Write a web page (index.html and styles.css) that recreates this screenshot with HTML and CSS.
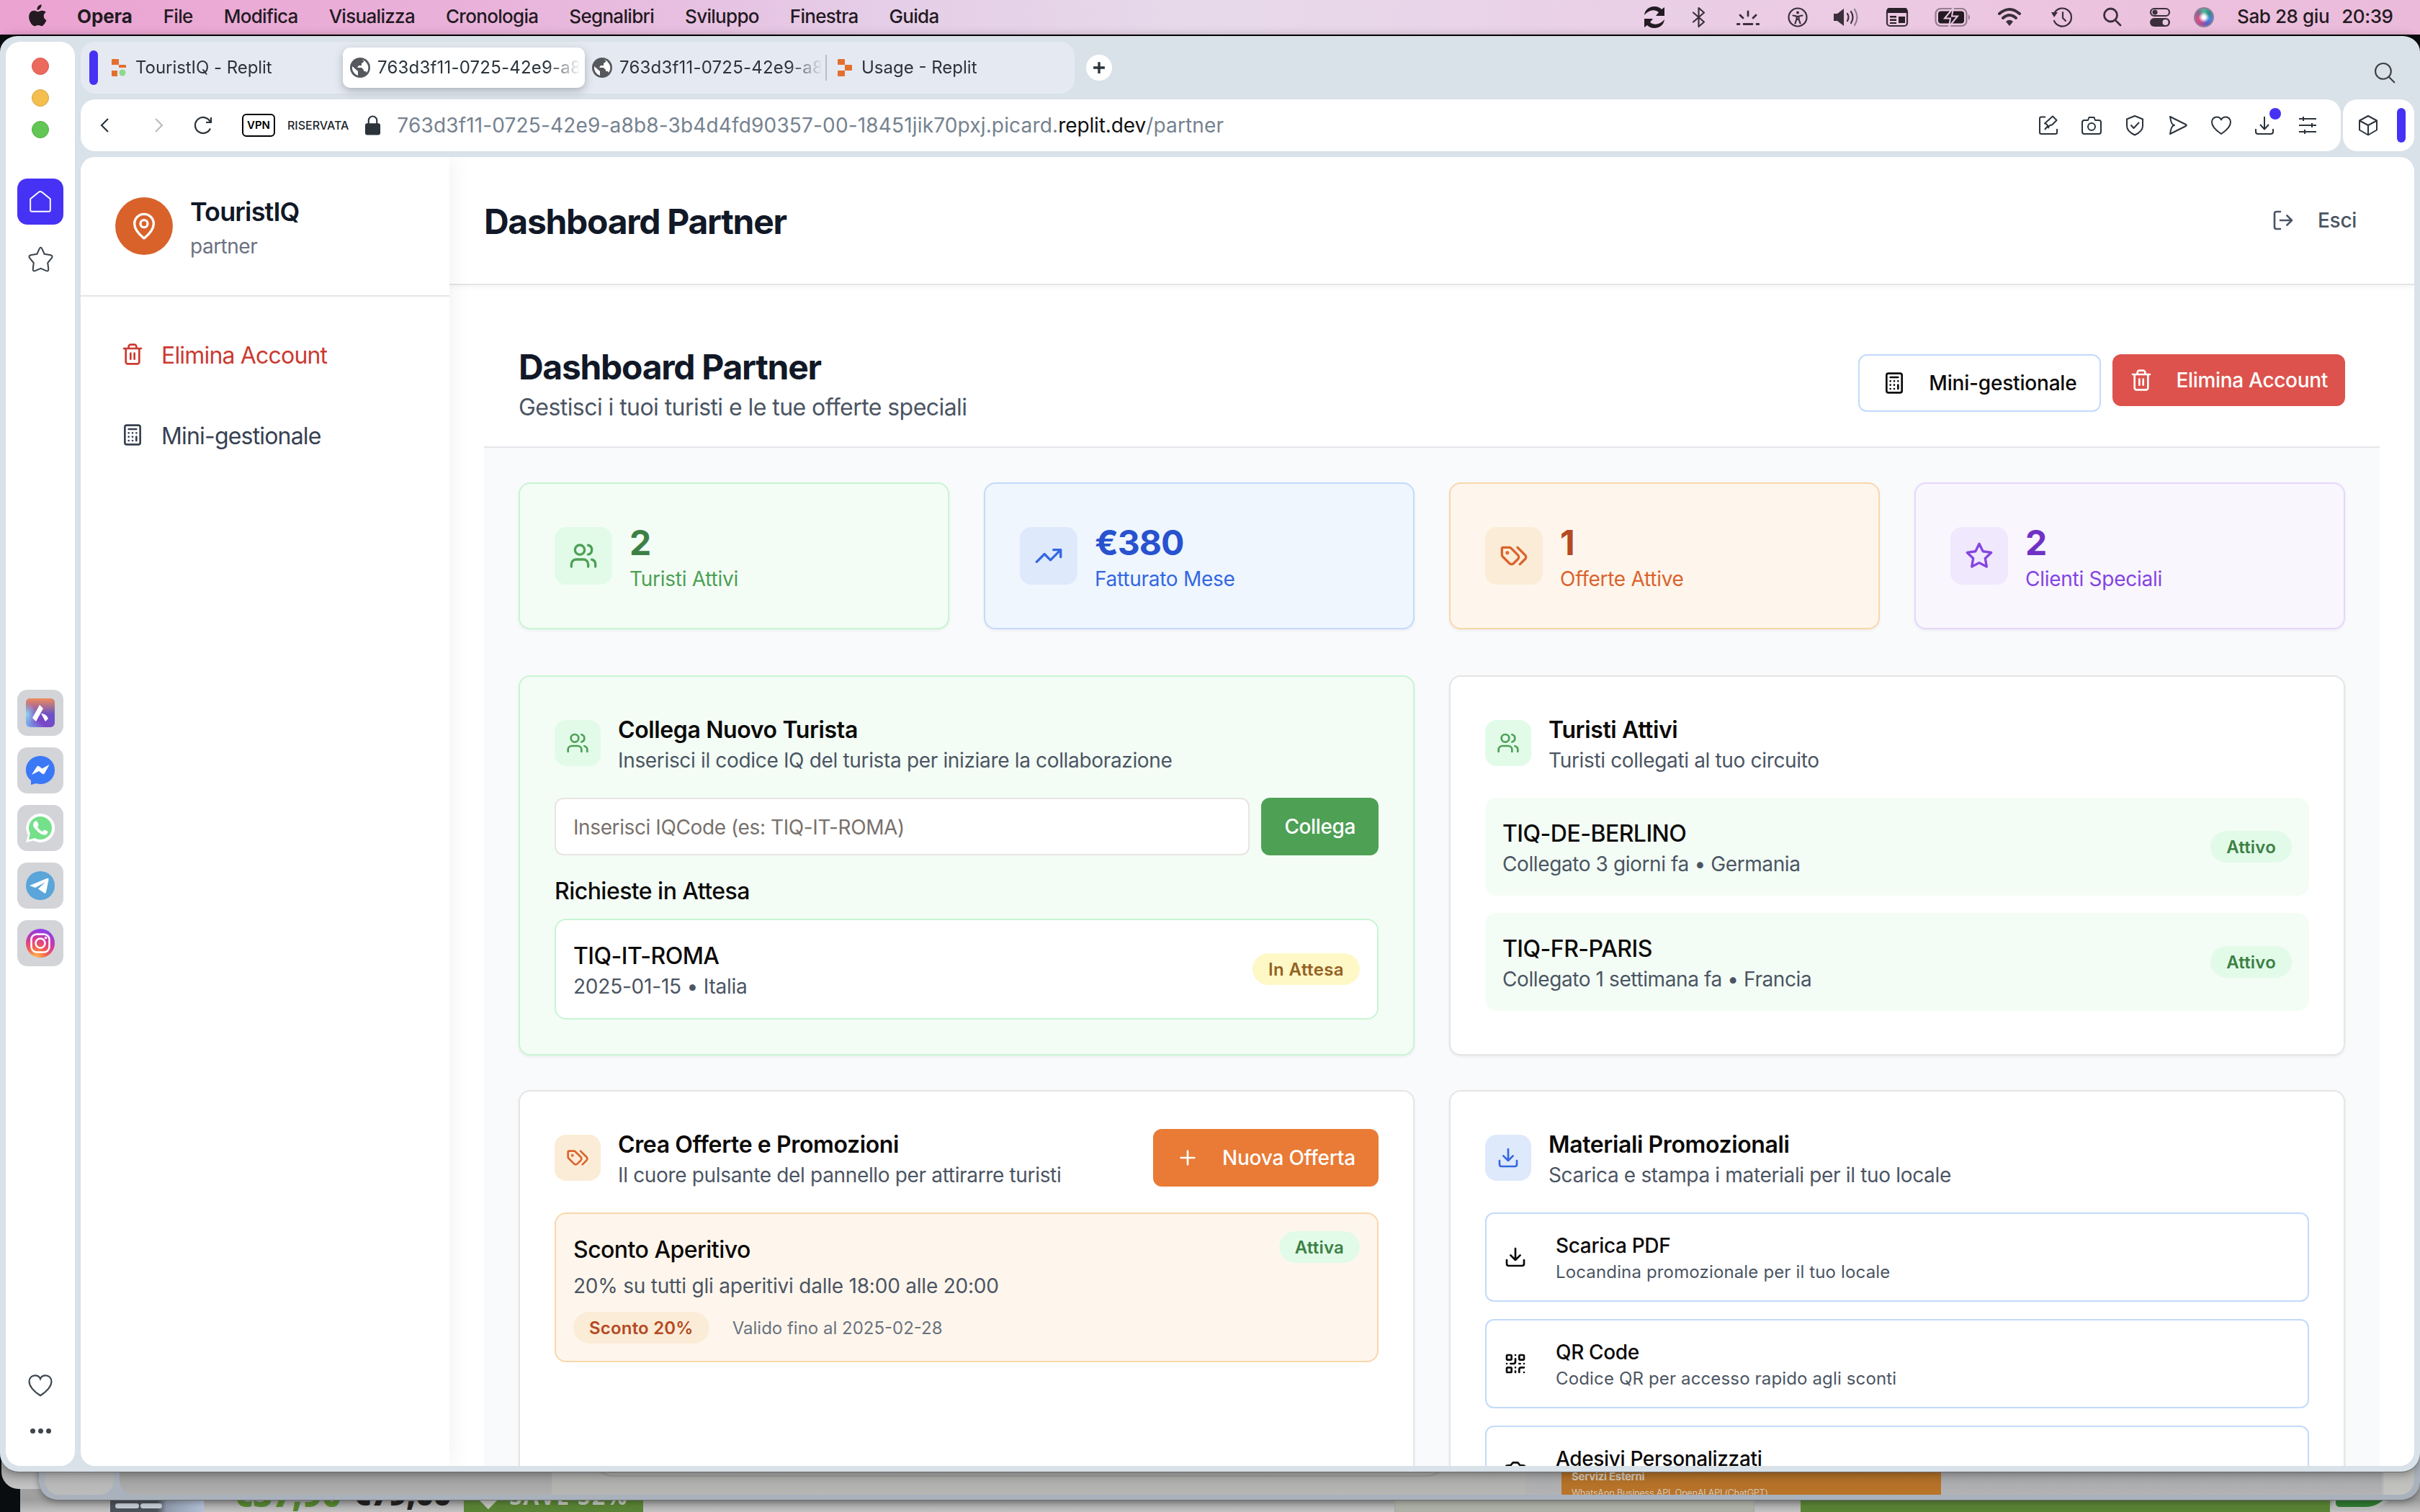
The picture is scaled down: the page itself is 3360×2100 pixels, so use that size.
FILE: index.html
```html
<!DOCTYPE html>
<html lang="it">
<head>
<meta charset="utf-8">
<title>TouristIQ - Dashboard Partner</title>
<link rel="stylesheet" href="styles.css">
</head>
<body>
<svg class="sprite" aria-hidden="true">
  <symbol id="i-users" viewBox="0 0 24 24"><path d="M16 21v-2a4 4 0 0 0-4-4H6a4 4 0 0 0-4 4v2"/><circle cx="9" cy="7" r="4"/><path d="M22 21v-2a4 4 0 0 0-3-3.87M16 3.13a4 4 0 0 1 0 7.75"/></symbol>
  <symbol id="i-trend" viewBox="0 0 24 24"><path d="M22 7l-8.5 8.5-5-5L2 17M16 7h6v6"/></symbol>
  <symbol id="i-tags" viewBox="0 0 24 24"><path d="m15 5 6.3 6.3a2.4 2.4 0 0 1 0 3.4L17 19"/><path d="M9.586 5.586A2 2 0 0 0 8.172 5H3a1 1 0 0 0-1 1v5.172a2 2 0 0 0 .586 1.414L8.29 18.29a2.426 2.426 0 0 0 3.42 0l3.58-3.58a2.426 2.426 0 0 0 0-3.42z"/><circle cx="6.5" cy="9.5" r=".5" fill="currentColor"/></symbol>
  <symbol id="i-star" viewBox="0 0 24 24"><path d="M12 2l3.09 6.26L22 9.27l-5 4.87 1.18 6.88L12 17.77l-6.18 3.25L7 14.14 2 9.27l6.91-1.01z"/></symbol>
  <symbol id="i-download" viewBox="0 0 24 24"><path d="M21 15v4a2 2 0 0 1-2 2H5a2 2 0 0 1-2-2v-4M7 10l5 5 5-5M12 15V3"/></symbol>
  <symbol id="i-qr" viewBox="0 0 24 24"><rect width="5" height="5" x="3" y="3" rx="1"/><rect width="5" height="5" x="16" y="3" rx="1"/><rect width="5" height="5" x="3" y="16" rx="1"/><path d="M21 16h-3a2 2 0 0 0-2 2v3M21 21v.01M12 7v3a2 2 0 0 1-2 2H7M3 12h.01M12 3h.01M12 16v.01M16 12h1M21 12v.01M12 21v-1"/></symbol>
  <symbol id="i-camera" viewBox="0 0 24 24"><path d="M14.5 4h-5L7 7H4a2 2 0 0 0-2 2v9a2 2 0 0 0 2 2h16a2 2 0 0 0 2-2V9a2 2 0 0 0-2-2h-3z"/><circle cx="12" cy="13" r="3"/></symbol>
  <symbol id="i-pin" viewBox="0 0 24 24"><path d="M20 10c0 4.993-5.539 10.193-7.399 11.799a1 1 0 0 1-1.202 0C9.539 20.193 4 14.993 4 10a8 8 0 0 1 16 0"/><circle cx="12" cy="10" r="3"/></symbol>
  <symbol id="i-logout" viewBox="0 0 24 24"><path d="M9 21H5a2 2 0 0 1-2-2V5a2 2 0 0 1 2-2h4M16 17l5-5-5-5M21 12H9"/></symbol>
  <symbol id="i-trash" viewBox="0 0 24 24"><path d="M3 6h18M19 6v14c0 1-1 2-2 2H7c-1 0-2-1-2-2V6M8 6V4c0-1 1-2 2-2h4c1 0 2 1 2 2v2M10 11v6M14 11v6"/></symbol>
  <symbol id="i-calc" viewBox="0 0 24 24"><rect width="16" height="20" x="4" y="2" rx="2"/><path d="M8 6h8M16 14v4M16 10h.01M12 10h.01M8 10h.01M12 14h.01M8 14h.01M12 18h.01M8 18h.01"/></symbol>
  <symbol id="i-plus" viewBox="0 0 24 24"><path d="M5 12h14M12 5v14"/></symbol>
  <symbol id="i-heart" viewBox="0 0 32 32"><path d="M16 28C7 22 3 17 3 11.500A6.800 6.800 0 0 1 9.800 4.500C12.500 4.500 15 6 16 8.500C17 6 19.500 4.500 22.200 4.500A6.800 6.800 0 0 1 29 11.500C29 17 25 22 16 28z"/></symbol>
  <symbol id="i-globe" viewBox="0 0 28 28"><circle cx="14" cy="14" r="14" fill="#55585c"/><path d="M3 12l8 7v6A12 12 0 0 1 3 12zM12 3h7v3l-3 2v3h-4l-2 3h6l3 3v2h3l1 2A11.500 11.500 0 0 0 24 9l-3-4-4-2z" fill="#fff"/></symbol>
</svg>

<header class="menubar">
  <svg class="apple" viewBox="0 0 24 30"><path d="M16.500 1c.2 2-0.600 3.600-1.600 4.800-1 1.200-2.400 2-3.900 1.900-.2-1.900.6-3.600 1.600-4.700C13.600 1.800 15.200 1.100 16.500 1zM22 10.600c-1.800 1.200-2.700 2.700-2.700 4.700 0 2.300 1.300 4.200 3.300 5-.9 2.500-3.300 7.200-5.900 7.300-1.600 0-2.200-1-4.200-1s-2.700 1-4.200 1C4.800 27.500 1 21.600 1 16.300 1 11.500 4 8.600 7.500 8.600c1.800 0 3.400 1.200 4.700 1.200 1.100 0 3-1.300 5.200-1.200 1.800.1 3.500.7 4.600 2z" fill="#231a22"/></svg>
  <nav class="menus"><b>Opera</b><span>File</span><span>Modifica</span><span>Visualizza</span><span>Cronologia</span><span>Segnalibri</span><span>Sviluppo</span><span>Finestra</span><span>Guida</span></nav>
  <div class="status">
    <svg viewBox="0 0 32 32"><path d="M2 13C3 5 9 1 16 1c5 0 8 2 10 4l4-3v12H18l4-5c-6-5-14-3-20 4zM30 19c-1 8-7 12-14 12-5 0-8-2-10-4l-4 3V18h12l-4 5c6 5 14 3 20-4z" fill="#231a22"/></svg>
    <svg viewBox="0 0 32 32"><path d="M8 9.500l15 13-7.500 6.500V3L23 9.500l-15 13" class="s2"/></svg>
    <svg viewBox="0 0 32 32"><path d="M1 25.500h3M10 25.500h12M28 25.500h3M16 8v6M5 13l4 4M27 13l-4 4" class="s3"/></svg>
    <svg viewBox="0 0 32 32"><circle cx="16" cy="16" r="12.500" class="s2"/><circle cx="16" cy="9.500" r="2" fill="#3a2f3a"/><path d="M9.500 13.500l5 1v4l-2 6M22.500 13.500l-5 1v4l2 6M14.500 15h3v4h-3z" class="s2"/></svg>
    <svg class="vol" viewBox="0 0 36 32"><path d="M1 11h5l9-7v24l-9-7H1z" fill="#3a2f3a"/><path d="M20 11q3 5 0 10M25 8q5 8 0 16" class="s2"/><path d="M30 5q7 11 0 22" class="s2 faint"/></svg>
    <svg viewBox="0 0 32 32"><rect x="2" y="4" width="28" height="24" rx="4" class="s2"/><path d="M2 6a3 3 0 0 1 3-3h22a3 3 0 0 1 3 3v4H2zM6 14h9v2.500H6zM6 18.500h9V21H6zM6 23h9v2H6zM18 15h9v9h-9z" fill="#2a2029"/></svg>
    <svg class="batt" viewBox="0 0 50 32"><rect x="1.500" y="4" width="43" height="24" rx="7" class="s2 faint"/><rect x="5" y="7.500" width="36" height="17" rx="4" fill="#231a22"/><path d="M26 3L14 17.500h8L20 29l12-14.500h-8z" fill="#231a22" stroke="#ecc9e3" stroke-width="2"/><path d="M47 12q4 4 0 8z" fill="#87758a"/></svg>
    <svg viewBox="0 0 32 32"><path d="M2 11q14-12 28 0M7 17q9-8 18 0" class="s4"/><path d="M11 22q5-4.500 10 0l-5 6z" fill="#3a2f3a"/></svg>
    <svg viewBox="0 0 32 32"><path d="M5.500 10A12.500 12.500 0 1 1 5 21M17 9v8l4 4" class="s2"/><path d="M1 9h9l-5 7z" fill="#3a2f3a"/></svg>
    <svg viewBox="0 0 32 32"><circle cx="13.500" cy="13" r="9" class="s3"/><path d="M20 20l7 7" class="s3"/></svg>
    <svg viewBox="0 0 32 32"><rect x="3" y="4" width="26" height="10" rx="5" class="s2"/><circle cx="9" cy="9" r="3.500" fill="#3a2f3a"/><rect x="2" y="17" width="28" height="12" rx="6" fill="#3a2f3a"/><circle cx="23.500" cy="23" r="4" fill="#ecc9e3"/></svg>
    <i class="siri"></i>
  </div>
  <div class="clock"><span>Sab 28 giu</span><span>20:39</span></div>
</header>

<div class="back back-a"></div>
<div class="back back-shop">
  <i class="thumb"></i><b class="price">€37,90</b><b class="price old">€79,00</b><span class="save"><i></i>SAVE 52%</span><i class="field"></i><i class="cta"></i><i class="wa"></i>
</div>
<div class="back back-b">
  <i class="bp bp1"></i>
  <div class="bp bp2"><i class="outline"></i><div class="ext"><b>Servizi Esterni</b><span>WhatsApp Business API, OpenAI API (ChatGPT)</span></div></div>
</div>

<main class="window">
  <aside class="dock">
    <div class="lights"><i></i><i></i><i></i></div>
    <div class="home"><svg viewBox="0 0 32 32"><path d="M3 12.500L14 3.500q2-1.500 4 0l11 9V27q0 2-2 2H5q-2 0-2-2z"/></svg></div>
    <svg class="fav" viewBox="0 0 36 36"><path d="M16.200 3.500Q18 0 19.800 3.500L23 10.500 31.500 12Q35 13 32.800 16L27.500 22.500 28.500 31Q28.500 34.500 25.500 33.200L18 30 10.500 33.200Q7.500 34.500 7.500 31L8.500 22.500 3.200 16Q1 13 4.500 12L13 10.500z"/></svg>
    <div class="apps">
      <div><svg viewBox="0 0 40 40"><defs><linearGradient id="ga" x1="0" y1="1" x2="1" y2="0"><stop offset="0" stop-color="#7ab8f0"/><stop offset=".35" stop-color="#7a45c8"/><stop offset="1" stop-color="#5a62c4"/></linearGradient><linearGradient id="gb" x2="0" y2="1"><stop offset="0" stop-color="#f08a5a"/><stop offset=".55" stop-color="#f08a5a" stop-opacity="0"/></linearGradient><radialGradient id="gc" cx="0" cy=".55" r=".4"><stop offset="0" stop-color="#8fdcf0"/><stop offset="1" stop-color="#8fdcf0" stop-opacity="0"/></radialGradient></defs><rect width="40" height="40" rx="6" fill="url(#ga)"/><rect width="40" height="40" rx="6" fill="url(#gb)"/><rect width="40" height="40" rx="6" fill="url(#gc)"/><path d="M19 9l5 5-10 18-5-5zM21 21q7 0 10 7l-4 4z" fill="#fff"/></svg></div>
      <div><svg viewBox="0 0 40 40"><path d="M20 0c11.500 0 20 8.500 20 19.500S31.500 39 20 39c-2 0-4-.3-6-1l-7 2v-6C2.500 30.500 0 25.500 0 19.500 0 8.500 8.500 0 20 0z" fill="#3b78f6"/><path d="M8 26l7-11q1.500-2 3.500-.5l4 3 10-5.500L26 24q-1.500 2-3.500.5L18 21z" fill="#fff"/></svg></div>
      <div><svg viewBox="0 0 40 40"><path d="M20 0a20 20 0 1 1-9.500 37.500L0 40l3-10A20 20 0 0 1 20 0z" fill="#fff"/><circle cx="20" cy="20" r="16" fill="#74e08a"/><path d="M6 27l-2 9 9-2z" fill="#74e08a"/><path d="M12 11q3-2 4 1l1.500 3q0 2-1.500 3 2 5 7 7 2-3 4-2l3 1.500q1 3-2 4.500-5 2-11.500-4T10 16q0-3 2-5z" fill="#fff"/></svg></div>
      <div><svg viewBox="0 0 40 40"><circle cx="20" cy="20" r="20" fill="#5aa5da"/><path d="M5 20L29 10q3-1 2.500 2L28 29q-.6 2.500-3 1l-8-5.500L27 15 13 23z" fill="#fff"/></svg></div>
      <div><svg viewBox="0 0 40 40"><defs><radialGradient id="ig" cx=".35" cy="1" r="1"><stop offset="0" stop-color="#fdc04e"/><stop offset=".35" stop-color="#f5614c"/><stop offset=".65" stop-color="#d93b92"/><stop offset="1" stop-color="#8a3cf0"/></radialGradient></defs><circle cx="20" cy="20" r="20" fill="url(#ig)"/><g fill="none" stroke="#fff" stroke-width="2.500"><rect x="7.500" y="7.500" width="25" height="25" rx="7.500"/><circle cx="20" cy="20" r="6.500"/></g><circle cx="27.500" cy="12.500" r="1.800" fill="#fff"/></svg></div>
    </div>
    <svg class="love"><use href="#i-heart"/></svg>
    <div class="dots"><i></i><i></i><i></i></div>
  </aside>

  <div class="main">
    <div class="tabrow">
      <div class="tabs">
        <i class="pill"></i>
        <div class="tab"><svg class="rp" viewBox="0 0 20 24"><path d="M0 1q0-1 1-1h8q1 0 1 1v7H0zM10 8h9q1 0 1 1v3h-10zM0 16h8v8H1q-1 0-1-1z" fill="#e36f2f"/><circle cx="15" cy="19" r="4.500" fill="#8fd88f"/></svg><span>TouristIQ - Replit</span></div>
        <div class="tab active"><svg><use href="#i-globe"/></svg><span>763d3f11-0725-42e9-a8b8</span></div>
        <div class="tab"><svg><use href="#i-globe"/></svg><span>763d3f11-0725-42e9-a8b8</span></div>
        <div class="tab sep"><svg class="rp" viewBox="0 0 20 24"><path d="M0 1q0-1 1-1h8q1 0 1 1v7h9q1 0 1 1v6q0 1-1 1h-9v7q0 1-1 1H1q-1 0-1-1v-6q0-1 1-1h9V8H1q-1 0-1-1z" fill="#e36f2f"/></svg><span>Usage - Replit</span></div>
      </div>
      <div class="newtab"><svg viewBox="0 0 16 16"><path d="M8 1v14M1 8h14"/></svg></div>
      <svg class="find" viewBox="0 0 28 28"><circle cx="11.500" cy="11.500" r="10.500"/><path d="M19 19l8 8"/></svg>
    </div>
    <div class="bars">
      <div class="address">
        <svg class="nav" viewBox="0 0 32 32"><path d="M20 7l-9 9 9 9"/></svg>
        <svg class="nav off" viewBox="0 0 32 32"><path d="M12 7l9 9-9 9"/></svg>
        <svg class="nav" viewBox="0 0 32 32"><path d="M26 20.500A11 11 0 1 1 26 11.500M27 5v7h-7"/></svg>
        <span class="vpn">VPN</span><span class="priv">RISERVATA</span>
        <svg class="lock" viewBox="0 0 24 28"><rect x="1" y="11" width="22" height="17" rx="3" fill="#2b333b"/><path d="M6 12V7a6 6 0 0 1 12 0v5" fill="none" stroke="#2b333b" stroke-width="2.200"/></svg>
        <span class="url">763d3f11-0725-42e9-a8b8-3b4d4fd90357-00-18451jik70pxj.picard.<b>replit.dev</b>/partner</span>
        <div class="tools">
          <svg viewBox="0 0 32 32"><path d="M12 4.500H6q-2 0-2 2V26q0 2 2 2h20q2 0 2-2v-5M27.500 9L22 3.500 11 13.500q4 .5 5 6 1-4 5-4zM16 16l-5 6"/></svg>
          <svg viewBox="0 0 32 32"><path d="M11 9l1.500-4h7L21 9h5q3 0 3 3v13q0 3-3 3H6q-3 0-3-3V12q0-3 3-3z"/><circle cx="16" cy="18" r="5"/></svg>
          <svg viewBox="0 0 32 32"><path d="M16 3l11 4.500V17q0 7.500-11 12.500Q5 24.500 5 17V7.500z"/><path d="M10.500 15.500l4 4.500 7.500-8"/></svg>
          <svg viewBox="0 0 32 32"><path d="M5 4l22 11q1.500 1 0 2L5 28q1.500-12 6-12Q6.500 16 5 4z"/></svg>
          <svg><use href="#i-heart"/></svg>
          <svg viewBox="0 0 32 32"><path d="M4 21v4q0 3 3 3h18q3 0 3-3v-4M16 4v17M10 15l6 6.500 6-6.500"/></svg>
          <svg viewBox="0 0 32 32"><path d="M4 7h24M4 16h24M4 25h24M10 4v6M22 13v6M12 22v6"/></svg>
          <i class="badge"></i>
        </div>
      </div>
      <div class="extra"><svg viewBox="0 0 32 32"><path d="M16 3l12 6.500v13L16 29.500 4 22.500v-13zM4 9.500L16 16l12-6.500M16 16v13.500"/></svg><i class="pill"></i></div>
    </div>

    <div class="page">
      <aside class="side">
        <div class="brand"><div class="logo"><svg class="ic"><use href="#i-pin"/></svg></div><div><h2>TouristIQ</h2><p>partner</p></div></div>
        <nav><a class="danger"><svg class="ic"><use href="#i-trash"/></svg><span>Elimina Account</span></a><a><svg class="ic"><use href="#i-calc"/></svg><span>Mini-gestionale</span></a></nav>
      </aside>
      <div class="content">
        <header class="top"><h1>Dashboard Partner</h1><a class="exit"><svg class="ic"><use href="#i-logout"/></svg>Esci</a></header>
        <div class="board">
          <div class="intro">
            <div><h1>Dashboard Partner</h1><p>Gestisci i tuoi turisti e le tue offerte speciali</p></div>
            <div class="actions"><a class="btn line"><svg class="ic"><use href="#i-calc"/></svg>Mini-gestionale</a><a class="btn red"><svg class="ic"><use href="#i-trash"/></svg>Elimina Account</a></div>
          </div>
          <div class="body">
            <section class="stats">
              <div class="stat green"><div class="box"><svg class="ic"><use href="#i-users"/></svg></div><div><b>2</b><span>Turisti Attivi</span></div></div>
              <div class="stat blue"><div class="box"><svg class="ic"><use href="#i-trend"/></svg></div><div><b>€380</b><span>Fatturato Mese</span></div></div>
              <div class="stat orange"><div class="box"><svg class="ic"><use href="#i-tags"/></svg></div><div><b>1</b><span>Offerte Attive</span></div></div>
              <div class="stat purple"><div class="box"><svg class="ic"><use href="#i-star"/></svg></div><div><b>2</b><span>Clienti Speciali</span></div></div>
            </section>
            <section class="cards">
              <article class="card tint">
                <div class="head green"><div class="box"><svg class="ic"><use href="#i-users"/></svg></div><div class="ttl"><h3>Collega Nuovo Turista</h3><p>Inserisci il codice IQ del turista per iniziare la collaborazione</p></div></div>
                <div class="form"><input placeholder="Inserisci IQCode (es: TIQ-IT-ROMA)"><a class="btn ok">Collega</a></div>
                <h4>Richieste in Attesa</h4>
                <div class="row outlined"><div><h5>TIQ-IT-ROMA</h5><p>2025-01-15 • Italia</p></div><span class="tag yellow">In Attesa</span></div>
              </article>
              <article class="card">
                <div class="head green"><div class="box"><svg class="ic"><use href="#i-users"/></svg></div><div class="ttl"><h3>Turisti Attivi</h3><p>Turisti collegati al tuo circuito</p></div></div>
                <div class="list">
                  <div class="row"><div><h5>TIQ-DE-BERLINO</h5><p>Collegato 3 giorni fa • Germania</p></div><span class="tag">Attivo</span></div>
                  <div class="row"><div><h5>TIQ-FR-PARIS</h5><p>Collegato 1 settimana fa • Francia</p></div><span class="tag">Attivo</span></div>
                </div>
              </article>
              <article class="card">
                <div class="head orange"><div class="box"><svg class="ic"><use href="#i-tags"/></svg></div><div class="ttl"><h3>Crea Offerte e Promozioni</h3><p>Il cuore pulsante del pannello per attirarre turisti</p></div><a class="btn new"><svg class="ic"><use href="#i-plus"/></svg>Nuova Offerta</a></div>
                <div class="offer">
                  <div class="offer-top"><h5>Sconto Aperitivo</h5><span class="tag">Attiva</span></div>
                  <p>20% su tutti gli aperitivi dalle 18:00 alle 20:00</p>
                  <div class="offer-foot"><span class="tag amber">Sconto 20%</span><small>Valido fino al 2025-02-28</small></div>
                </div>
              </article>
              <article class="card">
                <div class="head blue"><div class="box"><svg class="ic"><use href="#i-download"/></svg></div><div class="ttl"><h3>Materiali Promozionali</h3><p>Scarica e stampa i materiali per il tuo locale</p></div></div>
                <div class="list">
                  <a class="mat"><svg class="ic"><use href="#i-download"/></svg><div><b>Scarica PDF</b><small>Locandina promozionale per il tuo locale</small></div></a>
                  <a class="mat"><svg class="ic"><use href="#i-qr"/></svg><div><b>QR Code</b><small>Codice QR per accesso rapido agli sconti</small></div></a>
                  <a class="mat"><svg class="ic"><use href="#i-camera"/></svg><div><b>Adesivi Personalizzati</b></div></a>
                </div>
              </article>
            </section>
          </div>
        </div>
      </div>
    </div>
  </div>
</main>
</body>
</html>
```
FILE: styles.css
```css
* { box-sizing: border-box; margin: 0; padding: 0; }
body { width: 3360px; height: 2100px; overflow: hidden; position: relative; background: #0a0d10; color: #0c0a09; font: 400 28px/40px Inter, "Liberation Sans", sans-serif; letter-spacing: -.35px; }
i { font-style: normal; display: block; }
svg { display: block; flex: none; }
.sprite { position: absolute; width: 0; height: 0; }
.ic { width: 32px; height: 32px; fill: none; stroke: currentColor; stroke-width: 2; stroke-linecap: round; stroke-linejoin: round; }
h1 { font-size: 48px; line-height: 61px; padding-top: 3px; font-weight: 700; letter-spacing: -1.3px; color: #111827; }

/* macOS menu bar */
.menubar { height: 48px; display: flex; align-items: center; background: linear-gradient(90deg, #eba3d1 0%, #e9b2da 20%, #e5cde7 36%, #e7d9ea 50%, #e9d3e8 62%, #ecc8e2 80%, #ebbada 100%); font-size: 26px; font-weight: 500; letter-spacing: -.7px; color: #231a22; padding-left: 39px; }
.apple { width: 27px; height: 34px; margin-top: -4px; }
.menus { display: flex; gap: 43px; margin-left: 41px; flex: 1; margin-top: -2px; }
.menus b { letter-spacing: -.1px; }
.status { display: grid; grid-template-columns: 62px 62px 74px 64px 70px 72px 82px 76px 70px 70px 62px 60px; justify-items: center; align-items: center; }
.status svg { width: 32px; height: 32px; }
.status svg.vol { width: 38px; }
.status svg.batt { width: 50px; }
.s2, .s3, .s4 { fill: none; stroke: #3a2f3a; stroke-width: 2.2; stroke-linecap: round; stroke-linejoin: round; }
.s3 { stroke-width: 2.8; }
.s4 { stroke-width: 4; }
.faint { opacity: .5; }
.siri { width: 28px; height: 28px; border-radius: 50%; background: radial-gradient(circle, #fff 0 12%, transparent 45%), conic-gradient(#4cb897, #2a8a8a, #4b86d8, #5560c8, #c04a8a, #d8508a, #8a6090, #4cb897); border: 2px solid #8f7f98; }
.clock { display: flex; gap: 17px; width: 270px; padding-left: 16px; margin-top: -2px; white-space: nowrap; letter-spacing: -.4px; }

/* Windows behind the browser */
.back { position: absolute; }
.back-a { left: 2px; top: 1900px; width: 200px; height: 168px; border-radius: 0 0 0 24px; background: linear-gradient(#a8a8a8 85%, #c6c6c6); z-index: 2; }
.back-shop { left: 28px; top: 2044px; right: 0; height: 56px; background: linear-gradient(#a8a8a8, #9d9d9d 70%, #c2c2c2); z-index: 1; overflow: hidden; }
.back-shop > * { position: absolute; white-space: nowrap; }
.thumb { left: 125px; top: 30px; width: 130px; height: 26px; background: linear-gradient(90deg, #4a5158 0 50%, #8e99ab 60%, #b2c0d6); }
.thumb::before, .thumb::after { content: ""; position: absolute; left: 7px; top: 14px; width: 33px; height: 7px; background: #c3ccd4; border-radius: 4px; }
.thumb::after { left: 42px; width: 30px; }
.price { left: 296px; top: 4px; font: 800 46px/54px "Open Sans", sans-serif; letter-spacing: .2px; color: #55852f; }
.price.old { left: 462px; font-size: 43px; color: #222; letter-spacing: -.5px; }
.save { left: 616px; top: 0; width: 249px; height: 56px; background: #598334; color: #c0c3bb; font: 700 32px/36px "Open Sans", sans-serif; padding: 16px 0 0 63px; letter-spacing: 1.6px; }
.save i { position: absolute; left: 24px; top: 28px; width: 20px; height: 20px; background: #c0c3bb; transform: rotate(45deg); }
.field { left: 1908px; top: 0; width: 500px; height: 80px; border: 2px solid #a5aaa0; border-radius: 0 0 20px 20px; background: #adb0a6; }
.cta { left: 2472px; top: 0; width: 735px; height: 56px; background: #598334; }
.wa { left: 3210px; top: 0; width: 90px; height: 54px; background: #2f7a30; border: 5px solid #b5b9b5; border-radius: 0 0 45px 10px; }
.back-b { left: 54px; top: 1900px; right: 0; height: 184px; border-radius: 0 0 26px 26px; background: #a9b1bc; border-bottom: 1px solid #6d7075; padding: 0 8px 7px; display: flex; gap: 8px; z-index: 3; box-shadow: 0 2px 10px rgba(0,0,0,.35); }
.bp { border-radius: 0 0 20px 20px; overflow: hidden; }
.bp1 { width: 96px; background: linear-gradient(#b0b0b0 80%, #bcbcbc); }
.bp2 { flex: 1; position: relative; background: linear-gradient(90deg, #0000 600px, #c4c4bd55 600px 1950px, #b8bac055 1955px 3140px, #d5d5d088 3145px), linear-gradient(#9b9b9b 82%, #b0b0b0); }
.outline { position: absolute; left: 660px; top: 0; width: 1180px; height: 151px; border: 2px solid #9b9b9b; border-radius: 0 0 24px 24px; }
.ext { position: absolute; left: 2002px; top: 130px; width: 527px; height: 46px; background: linear-gradient(#a86c26, #ba7429); color: #d2c8ba; padding: 11px 14px 0; letter-spacing: -.2px; white-space: nowrap; overflow: hidden; }
.ext b { display: block; font-size: 15px; line-height: 20px; letter-spacing: -.3px; margin-bottom: 5px; }
.ext span { display: block; font-size: 12.5px; line-height: 16px; }

/* Browser window */
.window { position: absolute; left: 0; top: 48px; width: 3360px; height: 1996px; border-top: 2px solid #000; border-radius: 24px 24px 26px 26px; background: #d9e1e9; padding: 8px 8px 8px; display: flex; gap: 8px; z-index: 4; box-shadow: 0 1px 0 #6a6d72, 0 3px 14px rgba(0,0,0,.35); }
.dock { width: 96px; background: #fff; border-radius: 20px; display: flex; flex-direction: column; align-items: center; }
.lights { display: grid; gap: 20px; padding-top: 22px; }
.lights i { width: 24px; height: 24px; border-radius: 50%; background: #ec695e; border: 1px solid #d6584e; }
.lights i:nth-child(2) { background: #f4bf4f; border-color: #d9a33e; }
.lights i:nth-child(3) { background: #61c654; border-color: #52ad44; }
.home { width: 64px; height: 64px; border-radius: 14px; background: #4632f4; margin-top: 56px; display: grid; place-items: center; }
.home svg { width: 34px; height: 36px; fill: none; stroke: #fff; stroke-width: 1.8; }
.fav { width: 37px; height: 37px; margin-top: 30px; fill: none; stroke: #3d454d; stroke-width: 2; }
.apps { display: grid; gap: 16px; margin-top: 579px; }
.apps div { width: 64px; height: 64px; border-radius: 14px; background: #d3d4d8; display: grid; place-items: center; }
.apps svg { width: 40px; height: 40px; }
.love { width: 38px; height: 38px; margin-top: auto; fill: none; stroke: #3d454d; stroke-width: 1.8; }
.dots { display: flex; gap: 4px; margin: 41px 0 45px; }
.dots i { width: 7px; height: 7px; border-radius: 50%; background: #3d454d; }
.main { flex: 1; min-width: 0; display: flex; flex-direction: column; gap: 8px; }
.pill { width: 12px; height: 48px; border-radius: 6px; background: #4632f4; }

.tabrow { height: 72px; display: flex; align-items: center; }
.tabs { width: 1380px; height: 72px; border-radius: 20px; background: #e5eaf2; display: flex; align-items: center; padding-left: 12px; }
.tab { width: 336px; height: 56px; border-radius: 10px; display: flex; align-items: center; padding: 0 8px 0 10px; gap: 10px; font-size: 24px; letter-spacing: .2px; color: #2b333b; position: relative; }
.tab:nth-child(2) { margin-left: 4px; letter-spacing: -.05px; }
.tab.sep { letter-spacing: 0; }
.tab span { flex: 1; overflow: hidden; white-space: nowrap; -webkit-mask-image: linear-gradient(90deg, #000 235px, transparent 282px); mask-image: linear-gradient(90deg, #000 235px, transparent 282px); }
.tab svg { width: 28px; height: 28px; }
.tab svg.rp { width: 20px; height: 24px; margin-left: 5px; margin-right: 3px; }
.tab.active { background: #fff; box-shadow: 0 4px 12px rgba(60,70,80,.35); }
.tab.sep::before { content: ""; position: absolute; left: -2px; top: 10px; width: 2px; height: 36px; background: #b9c0c6; }
.newtab { width: 36px; height: 36px; border-radius: 50%; background: #fff; margin-left: 16px; display: grid; place-items: center; }
.newtab svg { width: 18px; height: 18px; stroke: #2b333b; stroke-width: 3; }
.find { width: 29px; height: 29px; margin: 14px 26px 0 auto; fill: none; stroke: #3d3f42; stroke-width: 2; }

.bars { height: 72px; display: flex; gap: 3px; }
.address { flex: 1; background: #fff; border-radius: 20px; display: flex; align-items: center; position: relative; padding-left: 18px; }
.nav { width: 32px; height: 32px; margin-right: 42px; fill: none; stroke: #2b333b; stroke-width: 2.2; }
.nav.off { stroke: #b9bdc1; margin-right: 30px; }
.nav:nth-of-type(3) { margin-right: 38px; }
.vpn { width: 46px; height: 32px; border: 2px solid #000; border-radius: 6px; font: 600 15px/28px Inter, sans-serif; letter-spacing: 0; text-align: center; color: #000; }
.priv { font-size: 16px; font-weight: 500; letter-spacing: 0; margin: 0 22px 0 17px; color: #20262c; }
.lock { width: 23px; height: 28px; }
.url { margin-left: 22px; letter-spacing: .16px; color: #75828f; white-space: nowrap; }
.url b { font-weight: 400; color: #111; letter-spacing: -.1px; }
.tools { margin-left: auto; margin-right: 30px; display: flex; gap: 28px; position: relative; }
.tools svg, .extra svg { width: 32px; height: 32px; fill: none; stroke: #2b333b; stroke-width: 2; stroke-linejoin: round; }
.badge { position: absolute; right: 53px; top: -8px; width: 16px; height: 16px; border-radius: 50%; background: #4632f4; }
.extra { width: 99px; background: #fff; border-radius: 20px; display: flex; align-items: center; justify-content: space-between; padding: 0 12px 0 19px; }

/* Page */
.page { flex: 1; min-height: 0; background: #fff; border-radius: 20px; overflow: hidden; display: flex; }
.side { width: 512px; box-shadow: 0 0 32px rgba(0,0,0,.07); position: relative; background: #fff; z-index: 1; }
.brand { height: 194px; border-bottom: 2px solid #e4e5e6; display: flex; align-items: center; gap: 24px; padding-left: 48px; }
.logo { width: 80px; height: 80px; border-radius: 50%; background: #d9622b; color: #fff; display: grid; place-items: center; }
.logo .ic { width: 40px; height: 40px; }
.brand h2 { font-size: 36px; line-height: 56px; font-weight: 600; letter-spacing: -.87px; color: #111827; }
.brand p { color: #6b7280; letter-spacing: -.5px; }
.side nav { padding: 32px; display: grid; gap: 16px; }
.side nav a { padding: 24px; display: flex; align-items: center; gap: 24px; font-size: 32px; line-height: 48px; letter-spacing: -.82px; color: #374151; }
.side nav a span { padding-top: 3px; line-height: 45px; }
.side nav a.danger { color: #cb3a31; }
.content { flex: 1; min-width: 0; }
.top { height: 178px; border-bottom: 2px solid #e4e5e6; box-shadow: 0 2px 8px rgba(0,0,0,.05); display: flex; justify-content: space-between; padding: 56px 80px 0 48px; }
.exit { display: flex; gap: 32px; align-items: center; height: 64px; font-weight: 500; color: #4b5563; letter-spacing: -.3px; }
.board { padding: 48px 48px 0; }
.intro { height: 178px; padding: 32px 48px; border-bottom: 2px solid #e4e6ea; display: flex; justify-content: space-between; align-items: center; }
.intro p { font-size: 32px; line-height: 45px; padding-top: 3px; letter-spacing: -.56px; color: #4b5563; }
.actions { display: flex; gap: 16px; align-items: flex-start; }
.btn { display: flex; align-items: center; gap: 32px; height: 80px; padding: 0 32px; border-radius: 12px; font-weight: 500; letter-spacing: -.2px; white-space: nowrap; color: #fff; }
.btn.line { border: 2px solid #c3dafb; color: #0c0a09; }
.btn.red { background: #dd524c; height: 72px; padding: 0 24px; letter-spacing: -.31px; }
.btn.ok { background: #4ea055; letter-spacing: -.38px; }
.btn.new { background: #e97b36; margin-left: auto; letter-spacing: -.22px; }
.body { background: #f9fafc; padding: 48px 48px 200px; }
.stats { display: grid; grid-template-columns: repeat(4, 1fr); gap: 48px; margin-bottom: 64px; }
.stat { height: 204px; border: 2px solid var(--line); background: var(--bg); border-radius: 16px; box-shadow: 0 2px 4px rgba(0,0,0,.06); display: flex; align-items: center; gap: 24px; padding: 0 48px; }
.stat b { display: block; font-size: 48px; line-height: 61px; padding-top: 3px; letter-spacing: -1px; color: var(--strong); }
.stat span { display: block; color: var(--fg); letter-spacing: -.26px; }
.box { width: 64px; height: 64px; border-radius: 16px; background: var(--box); color: var(--fg); display: grid; place-items: center; flex: none; }
.stat .box { width: 80px; height: 80px; }
.stat .ic { width: 40px; height: 40px; }
.green { --bg: #f3fdf5; --line: #c8f5d3; --box: #e2fbe9; --fg: #4ea055; --strong: #3d8045; }
.blue { --bg: #eff6fe; --line: #c3dafb; --box: #dee9fb; --fg: #3467e2; --strong: #2852ce; }
.orange { --bg: #fef6ec; --line: #f9d7ab; --box: #fbecd7; --fg: #da632d; --strong: #b54a24; }
.purple { --bg: #f9f6fe; --line: #e6d7fc; --box: #f0e8fd; --fg: #8444e2; --strong: #7032c6; }
.cards { display: grid; grid-template-columns: 1fr 1fr; gap: 48px; }
.card { background: #fff; border: 2px solid #e5e5e4; border-radius: 16px; padding: 48px; box-shadow: 0 2px 4px rgba(0,0,0,.06); }
.card.tint { background: #f3fdf5; border-color: #c8f5d3; }
.card p { color: #4b5563; letter-spacing: -.22px; }
.head { height: 88px; display: flex; align-items: center; gap: 24px; margin-bottom: 32px; }
.ttl { padding-top: 4px; white-space: nowrap; }
h3 { font-size: 32px; line-height: 37px; padding-top: 3px; font-weight: 600; letter-spacing: -.38px; margin-bottom: 4px; }
.card .head p { letter-spacing: -.34px; }
h4, h5 { font-size: 32px; line-height: 45px; padding-top: 3px; font-weight: 500; letter-spacing: -.54px; }
h4 { margin: 24px 0 16px; }
.form { display: flex; gap: 16px; }
input { flex: 1; height: 80px; border: 2px solid #e7e5e4; border-radius: 12px; padding: 2px 24px 0; font: inherit; letter-spacing: -.4px; background: #fff; }
input::placeholder { color: #78716c; opacity: 1; }
.list { display: grid; gap: 24px; }
.row { display: flex; justify-content: space-between; align-items: center; padding: 24px; background: #f3fdf5; border-radius: 16px; }
.row.outlined { background: #fff; border: 2px solid #c8f5d3; }
.card .row p { letter-spacing: -.4px; }
.card .row.outlined p { letter-spacing: -.22px; }
.tag { height: 44px; border-radius: 22px; padding: 1px 22px 0; font-size: 24px; line-height: 44px; font-weight: 600; letter-spacing: .2px; background: #e2fbe9; color: #3d8045; white-space: nowrap; }
.tag.yellow { background: #fdf8c6; color: #946024; letter-spacing: .4px; }
.tag.amber { background: #fbecd7; color: #b54a24; }
.offer { background: #fef6ec; border: 2px solid #f9d7ab; border-radius: 16px; padding: 24px; }
.offer-top { display: flex; justify-content: space-between; margin-bottom: 8px; }
.offer-foot { display: flex; align-items: center; gap: 32px; margin-top: 16px; }
small { font-size: 24px; line-height: 31px; padding-top: 1px; letter-spacing: 0; color: #6b7280; }
.mat { height: 124px; border: 2px solid #c3dafb; border-radius: 12px; padding: 24px; display: flex; gap: 40px; }
.mat .ic { margin-top: 20px; }
.mat b { display: block; font-weight: 500; letter-spacing: -.34px; }
.mat small { display: block; letter-spacing: .15px; color: #4b5563; }
```
